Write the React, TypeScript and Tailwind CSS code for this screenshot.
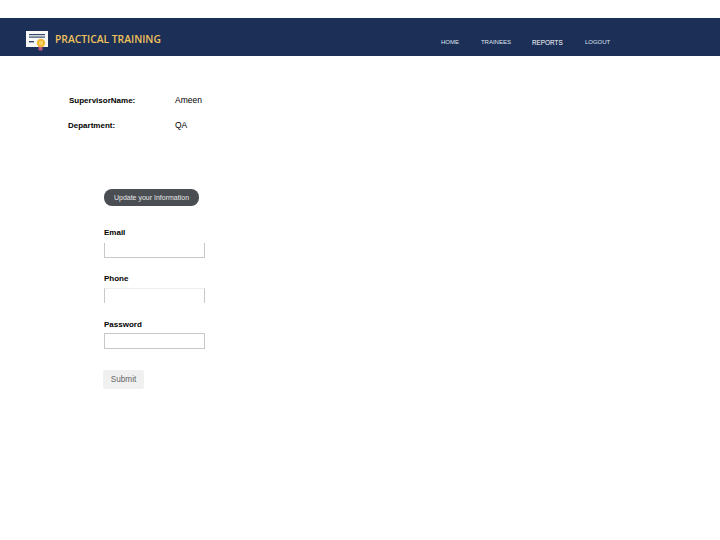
function CertificateIcon() {
  return (
    <svg width="22" height="22" viewBox="0 0 22 22" className="shrink-0">
      <rect x="0" y="2" width="22" height="16" fill="#f7f7f5" />
      <rect x="3" y="5" width="16" height="1.2" fill="#33466c" />
      <rect x="3" y="7.5" width="16" height="1.2" fill="#33466c" />
      <rect x="3" y="12" width="5" height="1.4" fill="#33466c" />
      <rect x="12.5" y="17" width="4" height="4.5" fill="#b8568a" />
      <circle cx="15" cy="14" r="4.2" fill="#f2b632" />
      <circle cx="15" cy="14" r="2.2" fill="#f8d266" />
    </svg>
  );
}

function Field({ label, className, inputClass }: { label: string; className: string; inputClass: string }) {
  return (
    <div className={className}>
      <p className="text-[8px] leading-[10px] font-bold text-black">{label}</p>
      <input className={`block w-[101px] bg-white ${inputClass}`} />
    </div>
  );
}

export default function App() {
  return (
    <div className="h-[540px] w-[720px] overflow-hidden bg-white pt-[18px] font-['Liberation_Sans',sans-serif]">
      <header className="flex h-[38px] items-start bg-[#1c2f57] pl-[26px] pt-[11px]">
        <CertificateIcon />
        <span className="ml-[7px] mt-[3px] font-['Open_Sans',sans-serif] text-[10.3px] leading-[14px] font-semibold text-[#f0c25a]">
          PRACTICAL TRAINING
        </span>
        <nav className="ml-[280px] mt-[7px] flex text-[6px] leading-[12px] text-[#dfe3ec]">
          <a className="w-[40px]">HOME</a>
          <a className="w-[51px]">TRAINEES</a>
          <a className="w-[53px] pt-px text-[6.4px] text-white">REPORTS</a>
          <a>LOGOUT</a>
        </nav>
      </header>

      <main className="pl-[68px] pt-[39px] text-[8.5px] leading-[11px] text-black">
        <div className="flex">
          <span className="w-[107px] pl-px text-[8px] font-bold">SupervisorName:</span>
          <span>Ameen</span>
        </div>
        <div className="mt-[14px] flex">
          <span className="w-[107px] text-[8px] font-bold">Department:</span>
          <span>QA</span>
        </div>

        <div className="ml-[36px] mt-[58px]">
          <div className="flex h-[17px] w-[95px] items-center justify-center rounded-[8px] bg-[#4a4d52] text-[7px] text-[#e8e8e8]">
            Update your Information
          </div>
          <Field
            label="Email"
            className="mt-[22px]"
            inputClass="mt-[5px] h-[15px] border-x border-b border-[#c8c8c8]"
          />
          <Field
            label="Phone"
            className="mt-[16px]"
            inputClass="mt-[4px] h-[15px] border-x border-t border-x-[#c8c8c8] border-t-[#eeeeee]"
          />
          <Field
            label="Password"
            className="mt-[17px]"
            inputClass="mt-[3px] h-[16px] border border-[#c8c8c8]"
          />
          <button className="mt-[22px] block h-[17px] w-[39px] bg-[#f0f0f0] text-[8.2px] text-[#666] shadow-[0_0_1px_#aaa]">
            Submit
          </button>
        </div>
      </main>
    </div>
  );
}
